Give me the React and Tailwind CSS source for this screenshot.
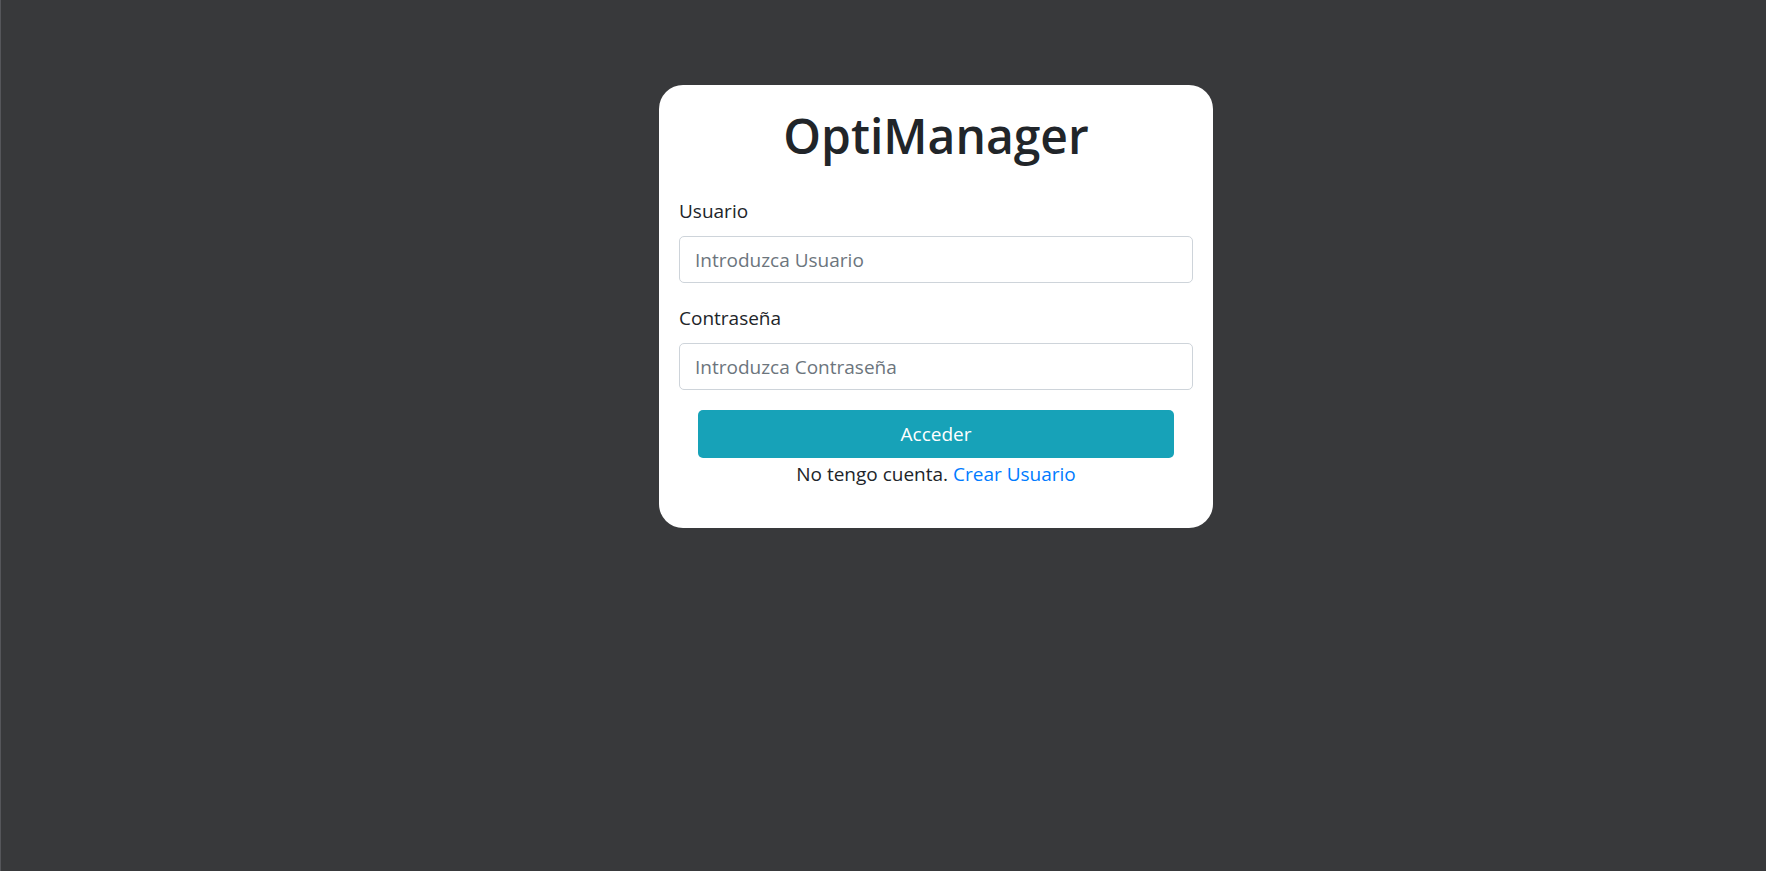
import React from 'react';

export default function App() {
  return (
    <div className="min-h-screen bg-[#38393b] border-l border-[#55565a] pl-[658px] pt-[85px] font-['Open_Sans',sans-serif] text-[#212529]">
      <div className="w-[554px] bg-white rounded-[24px] px-[20px] pt-[21px] pb-[39px]">
        <h1 className="text-center text-[48px] leading-[60px] font-semibold mb-[30px]">OptiManager</h1>

        <div className="mb-[20px]">
          <label className="block text-[19px] leading-[30px] mb-[10px]">Usuario</label>
          <input
            type="text"
            placeholder="Introduzca Usuario"
            className="block w-full h-[47px] px-[15px] text-[19px] border border-[#ced4da] rounded-[5px] placeholder:text-[#6c757d] outline-none"
          />
        </div>

        <div className="mb-[20px]">
          <label className="block text-[19px] leading-[30px] mb-[10px]">Contraseña</label>
          <input
            type="password"
            placeholder="Introduzca Contraseña"
            className="block w-full h-[47px] px-[15px] text-[19px] border border-[#ced4da] rounded-[5px] placeholder:text-[#6c757d] outline-none"
          />
        </div>

        <div className="mx-[19px]">
          <button className="w-full h-[48px] bg-[#17a2b8] text-white text-[19px] rounded-[5px]">
            Acceder
          </button>
          <p className="text-center text-[19px] leading-[30px] mt-[1px]">
            No tengo cuenta. <a href="#" className="text-[#007bff]">Crear Usuario</a>
          </p>
        </div>
      </div>
    </div>
  );
}
